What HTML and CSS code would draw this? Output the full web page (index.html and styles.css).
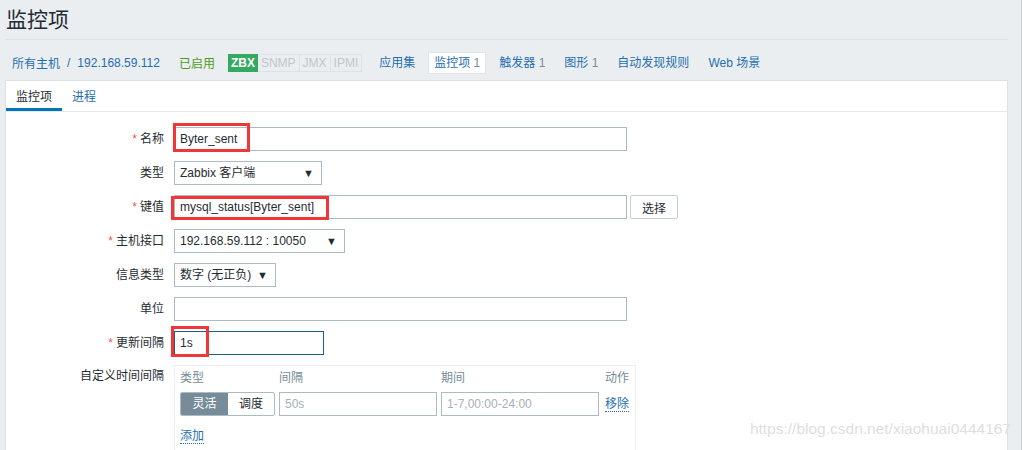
FILE: index.html
```html
<!DOCTYPE html>
<html lang="zh">
<head>
<meta charset="utf-8">
<title>监控项</title>
<link rel="stylesheet" href="styles.css">
</head>
<body>
<div class="page">
  <header class="header">
    <h1 class="title">监控项</h1>
  </header>
  <nav class="crumbs">
    <a class="link">所有主机</a>
    <span class="sep">/</span>
    <a class="link host">192.168.59.112</a>
    <span class="status">已启用</span>
    <span class="badges">
      <span class="badge on">ZBX</span><span class="badge">SNMP</span><span class="badge">JMX</span><span class="badge">IPMI</span>
    </span>
    <ul class="subnav">
      <li><a class="link">应用集</a></li>
      <li class="active"><a>监控项 <span class="count">1</span></a></li>
      <li><a class="link">触发器 <span class="count">1</span></a></li>
      <li><a class="link">图形 <span class="count">1</span></a></li>
      <li><a class="link">自动发现规则</a></li>
      <li><a class="link">Web 场景</a></li>
    </ul>
  </nav>
  <section class="panel">
    <div class="tabs">
      <span class="tab current">监控项</span>
      <span class="tab">进程</span>
    </div>
    <div class="form">
      <label class="lbl"><span class="req">*</span>名称</label>
      <div class="field"><div class="mark"><div class="input wide">Byter_sent</div><span class="redbox rb-name"></span></div></div>

      <label class="lbl">类型</label>
      <div class="field"><div class="select w-type">Zabbix 客户端<span class="arrow">▼</span></div></div>

      <label class="lbl"><span class="req">*</span>键值</label>
      <div class="field"><div class="mark"><div class="input wide">mysql_status[Byter_sent]</div><span class="redbox rb-key"></span></div><button class="btn">选择</button></div>

      <label class="lbl"><span class="req">*</span>主机接口</label>
      <div class="field"><div class="select w-iface">192.168.59.112 : 10050<span class="arrow">▼</span></div></div>

      <label class="lbl">信息类型</label>
      <div class="field"><div class="select w-info">数字 (无正负)<span class="arrow">▼</span></div></div>

      <label class="lbl">单位</label>
      <div class="field"><div class="input wide"></div></div>

      <label class="lbl"><span class="req">*</span>更新间隔</label>
      <div class="field"><div class="mark"><div class="input small focus">1s</div><span class="redbox rb-int"></span></div></div>

      <label class="lbl lbl-top">自定义时间间隔</label>
      <div class="field">
        <div class="intervals">
          <div class="ihead">
            <span class="c-type">类型</span>
            <span class="c-int">间隔</span>
            <span class="c-per">期间</span>
            <span class="c-act">动作</span>
          </div>
          <div class="irow">
            <div class="toggle"><span class="tg on">灵活</span><span class="tg">调度</span></div>
            <div class="input ph w-int">50s</div>
            <div class="input ph w-per">1-7,00:00-24:00</div>
            <a class="dlink">移除</a>
          </div>
          <div class="iadd"><a class="dlink">添加</a></div>
        </div>
      </div>
    </div>
  </section>
</div>
<div class="watermark">https://blog.csdn.net/xiaohuai0444167</div>
</body>
</html>
```

FILE: styles.css
```css
html {
  background: #ebeef1;
  height: 100%;
}
body {
  margin: 0;
  height: 450px;
  overflow: hidden;
  font-family: "Liberation Sans", Arial, "Noto Sans CJK SC", sans-serif;
  font-size: 12px;
  color: #1f2c33;
  border-right: 1px solid #c9cdd1;
  position: relative;
}
.page {
  width: 1003px;
  margin-left: 5px;
}
.header {
  height: 40px;
  border-bottom: 1px solid #dde2e5;
  box-sizing: border-box;
}
.title {
  margin: 0;
  padding: 7px 0 0 1px;
  font-size: 21px;
  font-weight: normal;
  line-height: 26px;
  color: #1f2c33;
}
.crumbs {
  display: flex;
  align-items: center;
  height: 40px;
  padding: 5px 0 0 7px;
  box-sizing: border-box;
}
.link { color: #1f6eb0; }
.sep { color: #1f6eb0; margin: 0 7px 0 7px; }
.status { color: #4e9a23; margin-left: 19px; }
.badges {
  display: flex;
  margin-left: 13px;
  height: 18px;
}
.badge {
  display: flex;
  align-items: center;
  padding: 0 3px;
  color: #c1c7cb;
  border: 1px solid #dde2e5;
  border-left: none;
  font-size: 12px;
  line-height: 16px;
}
.badge.on {
  background: #35a862;
  border-color: #35a862;
  color: #fff;
  font-weight: bold;
  padding: 0 2px 0 3px;
}
.subnav {
  list-style: none;
  display: flex;
  align-items: center;
  margin: 0 0 0 11px;
  padding: 0;
}
.subnav li {
  padding: 3px 5px;
  margin-right: 7px;
  line-height: 14px;
  border: 1px solid transparent;
  white-space: nowrap;
}
.subnav li.active {
  background: #fff;
  border-color: #e1e5e8;
  color: #1f6eb0;
}
.count { color: #7b8c96; }

.panel {
  background: #fff;
  border: 1px solid #dde2e5;
  border-bottom: none;
  height: 370px;
  box-sizing: border-box;
}
.tabs {
  display: flex;
  height: 31px;
  border-bottom: 1px solid #e6e9ec;
  box-sizing: border-box;
}
.tab {
  padding: 8px 10px 0 10px;
  color: #1f6eb0;
  line-height: 16px;
}
.tab.current {
  color: #1f2c33;
  border-bottom: 3px solid #0275b8;
}
.form {
  display: grid;
  grid-template-columns: 158px 1fr;
  column-gap: 10px;
  row-gap: 10px;
  padding-top: 15px;
}
.lbl {
  text-align: right;
  line-height: 24px;
  height: 24px;
  white-space: nowrap;
}
.req { color: #e45959; margin-right: 3px; }
.field {
  display: flex;
  align-items: flex-start;
  gap: 3px;
}
.mark { position: relative; }
.input, .select {
  height: 24px;
  box-sizing: border-box;
  border: 1px solid #acbbc2;
  padding: 0 5px;
  line-height: 22px;
  background: #fff;
  white-space: nowrap;
}
.wide { width: 453px; }
.small { width: 150px; }
.focus { border-color: #1a5e8e; }
.select {
  display: flex;
  justify-content: space-between;
  align-items: center;
}
.arrow { font-size: 11px; margin-right: 2px; }
.w-type { width: 148px; }
.w-iface { width: 171px; }
.w-info { width: 102px; }
.btn {
  height: 24px;
  width: 48px;
  border: 1px solid #c7d0d5;
  background: #fff;
  font: inherit;
  color: #1f2c33;
  padding: 0;
  border-radius: 2px;
}
.redbox {
  position: absolute;
  border: 3px solid #f03636;
  box-sizing: border-box;
  pointer-events: none;
}
.rb-name { left: -1px; top: -4px; width: 77px; height: 29px; }
.rb-key { left: -3px; top: 1px; width: 158px; height: 24px; }
.rb-int { left: -3px; top: -5px; width: 38px; height: 31px; }

.lbl-top { line-height: 22px; }
.intervals {
  width: 462px;
  height: 90px;
  border: 1px solid #ebeef1;
  border-bottom: none;
  box-sizing: border-box;
  padding: 4px 5px 0 5px;
}
.ihead {
  display: flex;
  color: #768d99;
  line-height: 16px;
  height: 18px;
  margin-bottom: 4px;
}
.c-type { width: 99px; }
.c-int { width: 162px; }
.c-per { width: 164px; }
.irow {
  display: flex;
  align-items: center;
  gap: 4px;
}
.toggle {
  display: flex;
  height: 24px;
  border: 1px solid #acbbc2;
  border-radius: 2px;
  box-sizing: border-box;
  overflow: hidden;
}
.tg {
  width: 46px;
  text-align: center;
  line-height: 22px;
  color: #1f2c33;
}
.tg.on { background: #768d99; color: #fff; width: 47px; }
.ph { color: #a6b0b6; }
.w-int, .w-per { width: 158px; }
.dlink {
  color: #1f6eb0;
  border-bottom: 1px dotted #1f6eb0;
  line-height: 14px;
  margin-left: 2px;
  white-space: nowrap;
}
.iadd { margin-top: 13px; }
.iadd .dlink { margin-left: 0; }
.watermark {
  position: absolute;
  right: 10px;
  top: 420px;
  font-size: 15.5px;
  color: #dcdfe2;
  white-space: nowrap;
}
```
